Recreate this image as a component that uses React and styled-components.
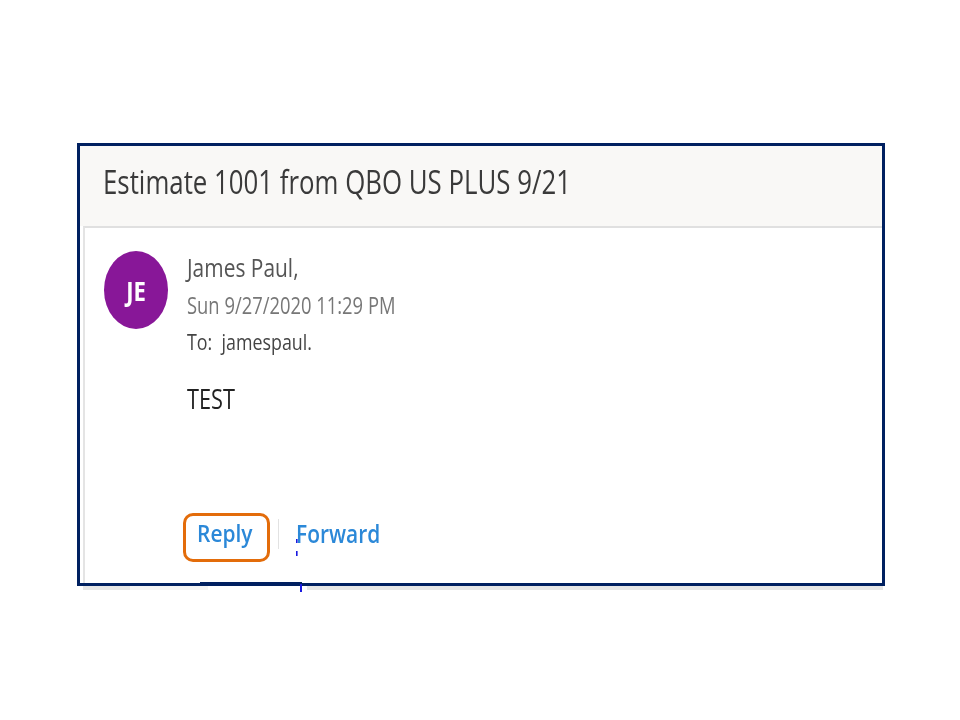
import React from "react";
import styled, { createGlobalStyle } from "styled-components";

const Global = createGlobalStyle`
  html, body { margin: 0; padding: 0; background: #fff; }
  body { font-family: "Open Sans", "Noto Sans", sans-serif; }
`;
const Page = styled.div`
  width: 960px;
  height: 720px;
  padding: 143px 0 0 77px;
  box-sizing: border-box;
  overflow: hidden;
`;
const Shadow = styled.div`
  position: relative;
  width: 808px;
  &::after {
    content: "";
    position: absolute;
    left: 6px;
    right: 2px;
    top: 443px;
    height: 4px;
    background: linear-gradient(90deg, #e6e6e6 0 47px, #f4f4f4 47px 125px, #fff 125px 224px, #e6e6e6 224px);
  }
`;
const Notch = styled.div`
  position: absolute;
  left: 123px;
  top: 439px;
  width: 102px;
  height: 2px;
  background: #002060;
  z-index: 2;
  &::after {
    content: "";
    position: absolute;
    right: 0;
    top: 2px;
    width: 2px;
    height: 8px;
    background: #1a1ae0;
  }
`;
const Frame = styled.div`
  position: relative;
  height: 443px;
  box-sizing: border-box;
  border: 3px solid #002060;
  display: flex;
  flex-direction: column;
  overflow: hidden;
`;
const Header = styled.div`
  height: 80px;
  flex: none;
  background: #f9f8f6;
  padding-left: 23px;
  display: flex;
  align-items: flex-start;
`;
const Title = styled.h1`
  margin: 16px 0 0;
  font-size: 32px;
  line-height: 40px;
  font-weight: 400;
  color: #3a3a3a;
  white-space: nowrap;
  transform: scaleX(0.807);
  transform-origin: left center;
  filter: blur(0.45px);
`;
const Card = styled.div`
  flex: 1;
  margin-left: 3px;
  border-top: 2px solid #e0e0e0;
  border-left: 2px solid #e4e4e4;
  background: #fff;
  padding: 23px 0 0 19px;
  display: flex;
  gap: 19px;
`;
const Avatar = styled.div`
  width: 64px;
  height: 78px;
  flex: none;
  border-radius: 50%;
  background: #881798;
  color: #fff;
  display: flex;
  align-items: center;
  justify-content: center;
  filter: blur(0.3px);
`;
const Initials = styled.span`
  font-size: 27px;
  font-weight: 700;
  transform: scaleX(0.82);
`;
const Body = styled.div`
  display: flex;
  flex-direction: column;
  flex: 1;
  filter: blur(0.4px);
`;
const Sender = styled.div`
  margin-top: 1px;
  font-size: 26px;
  line-height: 30px;
  color: #555;
  transform: scaleX(0.805);
  transform-origin: left center;
  white-space: nowrap;
`;
const Sent = styled.div`
  margin-top: 8px;
  font-size: 24px;
  line-height: 30px;
  color: #777;
  transform: scaleX(0.766);
  transform-origin: left center;
  white-space: nowrap;
`;
const To = styled.div`
  margin-top: 9px;
  font-size: 21px;
  line-height: 26px;
  color: #444;
  transform: scaleX(0.85);
  transform-origin: left center;
  white-space: pre;
`;
const Message = styled.div`
  margin-top: 27px;
  font-size: 27px;
  line-height: 34px;
  color: #222;
  transform: scaleX(0.806);
  transform-origin: left center;
`;
const Actions = styled.div`
  margin-top: 97px;
  margin-left: -4px;
  display: flex;
  align-items: center;
`;
const ReplyButton = styled.div`
  width: 87px;
  height: 49px;
  box-sizing: border-box;
  border: 3px solid #e36c0a;
  border-radius: 10px;
  color: #2b88d8;
  display: flex;
  align-items: center;
  justify-content: center;
`;
const ReplyText = styled.span`
  font-size: 22.5px;
  font-weight: 600;
  transform: scaleX(0.93);
  position: relative;
  top: -4px;
  left: -2px;
`;
const Divider = styled.div`
  width: 1px;
  height: 30px;
  margin: 0 17px 7px 8px;
  background: #e2e2e2;
`;
const ForwardLink = styled.div`
  position: relative;
  top: -5px;
  color: #2b88d8;
  font-size: 26px;
  font-weight: 600;
  transform: scaleX(0.805);
  transform-origin: left center;
`;
const BlueTick = styled.i`
  position: absolute;
  left: 0;
  top: ${(p) => p.$top}px;
  width: 2px;
  height: ${(p) => p.$h}px;
  background: #1a1ae0;
`;

export default function App() {
  return (
    <>
      <Global />
      <Page>
        <Shadow>
          <Frame>
            <Header>
              <Title>Estimate 1001 from QBO US PLUS 9/21</Title>
            </Header>
            <Card>
              <Avatar><Initials>JE</Initials></Avatar>
              <Body>
                <Sender>James Paul,</Sender>
                <Sent>Sun 9/27/2020 11:29 PM</Sent>
                <To>To:  jamespaul.</To>
                <Message>TEST</Message>
                <Actions>
                  <ReplyButton><ReplyText>Reply</ReplyText></ReplyButton>
                  <Divider />
                  <ForwardLink>
                    Forward
                    <BlueTick $top={24} $h={4} />
                    <BlueTick $top={36} $h={5} />
                  </ForwardLink>
                </Actions>
              </Body>
            </Card>
          </Frame>
          <Notch />
        </Shadow>
      </Page>
    </>
  );
}
